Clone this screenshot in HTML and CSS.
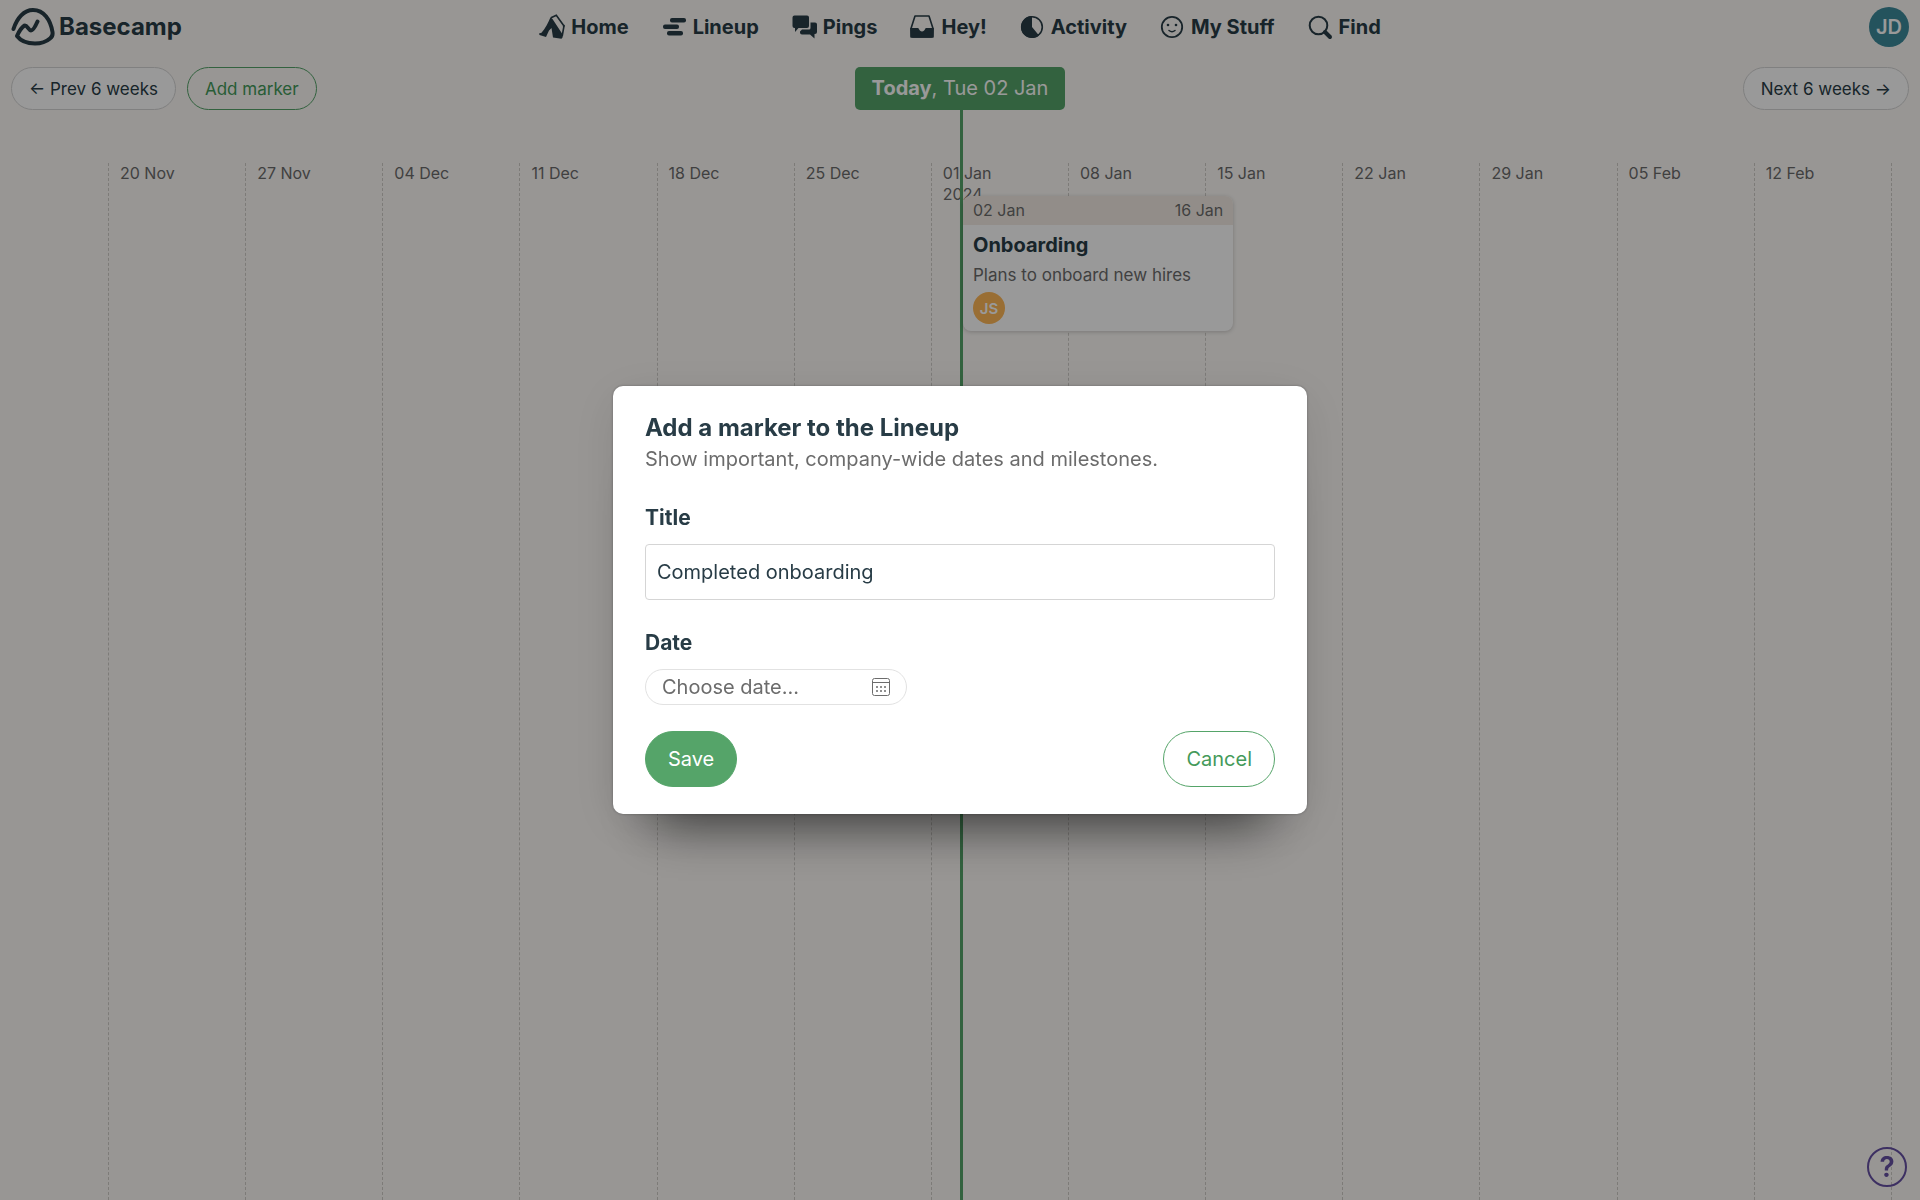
FILE: index.html
```
<!DOCTYPE html>
<html lang="en">
<head>
  <meta charset="utf-8">
  <title>Lineup - Basecamp</title>
  <link rel="stylesheet" href="styles.css">
</head>
<body>
  <header class="header">
    <a class="logo" href="#">
      <svg width="44" height="40" viewBox="0 0 44 40" fill="none" stroke="currentColor" stroke-width="4" stroke-linecap="round" stroke-linejoin="round">
        <path d="M2.500 22C6 11 13 3 22 3c11 0 17.500 10 19.500 22 .5 3 0 4.500-2.500 6.500C35 35 30 36.500 24 36.500c-9 0-15-3.500-18-7.500 1.500-3.500 4.500-8.500 7.500-10.500 2.500-1 4 5 6.500 5 2.200 0 4.500-4.500 6.500-9"/>
      </svg>
      <span>Basecamp</span>
    </a>
    <nav class="nav">
      <a href="#home">
        <svg width="26" height="26" viewBox="0 0 26 26" fill="currentColor">
          <path d="M11.500 3.200 13.500 5l9.500 14.500 .8 3.500-1.300 1.800-8.500-1.300-1.500-9.500-2.500 2.500-3 6.500L.5 21l-.5-1.500 2.500-.8C6.500 14 9 9 11.500 3.200z"/>
          <path d="M12 3.800 17.300 1.200 25 12l-1.800 10M25.800 11.200l-1.600 1.600" fill="none" stroke="currentColor" stroke-width="1.600"/>
        </svg>
        Home
      </a>
      <a href="#lineup">
        <svg width="26" height="26" viewBox="0 0 26 26" fill="currentColor">
          <rect x="9" y="4" width="16" height="4.500" rx="2"/>
          <rect x="2" y="10.500" width="16" height="4.500" rx="2"/>
          <rect x="6" y="17" width="16" height="4.500" rx="2"/>
        </svg>
        Lineup
      </a>
      <a href="#pings">
        <svg width="26" height="26" viewBox="0 0 26 26" fill="currentColor">
          <path d="M3.500 1.500h12.500a2 2 0 0 1 2 2v8.500a2 2 0 0 1-2 2H7.500L4 18v-4h-.5a2 2 0 0 1-2-2V3.500a2 2 0 0 1 2-2z"/>
          <path d="M19.500 8.500H24a2 2 0 0 1 2 2V18a2 2 0 0 1-2 2h-.5v4.500L19 20.500h-8a2 2 0 0 1-2-2v-1l2-2h7a1.500 1.500 0 0 0 1.500-1.500z"/>
        </svg>
        Pings
      </a>
      <a href="#hey">
        <svg width="26" height="26" viewBox="0 0 26 26">
          <path d="M6 2h14l4 12.500v8.500H2v-8.500z" fill="none" stroke="currentColor" stroke-width="1.600" stroke-linejoin="round"/>
          <path d="M1.200 14h7.300c.8 0 1.200.5 1.500 1.200.5 1.200 1.500 2.300 3 2.300s2.500-1.100 3-2.300c.3-.7.700-1.200 1.500-1.200h7.300l-.6 8a2 2 0 0 1-2 1.800H3.800a2 2 0 0 1-2-1.800z" fill="currentColor"/>
        </svg>
        Hey!
      </a>
      <a href="#activity">
        <svg width="26" height="26" viewBox="0 0 26 26">
          <circle cx="13" cy="13" r="10.300" fill="none" stroke="currentColor" stroke-width="1.600"/>
          <path d="M13 2v11l7 8.500A11 11 0 1 1 13 2z" fill="currentColor"/>
        </svg>
        Activity
      </a>
      <a href="#stuff">
        <svg width="26" height="26" viewBox="0 0 26 26" fill="none" stroke="currentColor" stroke-width="1.800" stroke-linecap="round">
          <circle cx="13" cy="13" r="10.200"/>
          <circle cx="9" cy="11" r="1.300" fill="currentColor" stroke="none"/>
          <circle cx="17" cy="11" r="1.300" fill="currentColor" stroke="none"/>
          <path d="M10 16.500q3 2.500 6 0" stroke-width="1.500"/>
        </svg>
        My Stuff
      </a>
      <a href="#find">
        <svg width="26" height="26" viewBox="0 0 26 26" fill="none" stroke="currentColor" stroke-linecap="round">
          <circle cx="11.500" cy="11.500" r="8.800" stroke-width="2"/>
          <path d="m18 18 5 5" stroke-width="4"/>
        </svg>
        Find
      </a>
    </nav>
    <div class="header-right">
      <a class="avatar avatar-me" href="#me">JD</a>
    </div>
  </header>

  <main class="lineup">
    <div class="toolbar">
      <div class="toolbar-left">
        <button class="btn-small">← Prev 6 weeks</button>
        <button class="btn-small btn-green">Add marker</button>
      </div>
      <div class="today"><strong>Today</strong>, Tue 02 Jan</div>
      <div class="toolbar-right">
        <button class="btn-small">Next 6 weeks →</button>
      </div>
    </div>

    <div class="weeks">
      <div class="week">20 Nov</div>
      <div class="week">27 Nov</div>
      <div class="week">04 Dec</div>
      <div class="week">11 Dec</div>
      <div class="week">18 Dec</div>
      <div class="week">25 Dec</div>
      <div class="week">01 Jan<br>2024</div>
      <div class="week">08 Jan</div>
      <div class="week">15 Jan</div>
      <div class="week">22 Jan</div>
      <div class="week">29 Jan</div>
      <div class="week">05 Feb</div>
      <div class="week">12 Feb</div>
      <div class="week"></div>
    </div>

    <div class="today-line"></div>

    <article class="project">
      <div class="project-dates"><span>02 Jan</span><span>16 Jan</span></div>
      <div class="project-body">
        <h3>Onboarding</h3>
        <p>Plans to onboard new hires</p>
        <span class="avatar avatar-js">JS</span>
      </div>
    </article>
  </main>

  <button class="help" aria-label="Help">?</button>

  <div class="overlay">
    <form class="modal">
      <h2>Add a marker to the Lineup</h2>
      <p class="subtitle">Show important, company-wide dates and milestones.</p>

      <label for="marker-title">Title</label>
      <input type="text" id="marker-title" class="title-input" value="Completed onboarding">

      <label for="marker-date">Date</label>
      <div class="date-field">
        <input type="text" id="marker-date" placeholder="Choose date...">
        <svg width="18" height="18" viewBox="0 0 18 18" fill="none" stroke="currentColor">
          <rect x=".5" y=".5" width="17" height="17" rx="2"/>
          <path d="M.5 4.500h17"/>
          <path d="M4 9h2m2 0h2m2 0h2M4 13h2m2 0h2m2 0h2" stroke-width="1.500"/>
        </svg>
      </div>

      <div class="actions">
        <button type="submit" class="btn btn-save">Save</button>
        <button type="button" class="btn btn-cancel">Cancel</button>
      </div>
    </form>
  </div>
</body>
</html>
```

FILE: styles.css
```
* {
  box-sizing: border-box;
}
body {
  margin: 0;
  min-height: 100vh;
  display: flex;
  flex-direction: column;
  font-family: Inter, "Liberation Sans", sans-serif;
  background-color: #fdfaf7;
  color: #283c46;
}
a {
  color: inherit;
  text-decoration: none;
}
button, input {
  font-family: inherit;
  margin: 0;
}
h2, h3, p {
  margin: 0;
}

/* header */
.header {
  display: flex;
  align-items: center;
  height: 53px;
  padding: 0 11px;
}
.logo, .header-right {
  flex: 1;
  display: flex;
  align-items: center;
}
.logo {
  gap: 4px;
  font-size: 24px;
  font-weight: 700;
}
.header-right {
  justify-content: flex-end;
}
.nav {
  display: flex;
  gap: 32px;
}
.nav a {
  display: flex;
  align-items: center;
  gap: 6px;
  font-size: 20px;
  font-weight: 700;
}
.avatar {
  display: flex;
  align-items: center;
  justify-content: center;
  border-radius: 50%;
  color: white;
  font-weight: 600;
}
.avatar-me {
  width: 40px;
  height: 40px;
  background-color: #3c8a9b;
  font-size: 20px;
}

/* lineup */
.lineup {
  position: relative;
  flex: 1;
  display: flex;
  flex-direction: column;
  overflow: hidden;
}
.toolbar {
  display: flex;
  align-items: center;
  padding: 14px 11px 53px;
}
.toolbar-left, .toolbar-right {
  flex: 1;
  display: flex;
  gap: 11px;
}
.toolbar-right {
  justify-content: flex-end;
}
.btn-small {
  height: 43px;
  padding: 0 17px;
  border: 1px solid #d5d5d5;
  border-radius: 22px;
  background-color: white;
  color: #283c46;
  font-size: 17px;
}
.btn-green {
  border-color: #55a469;
  background-color: transparent;
  color: #449a5a;
}
.today {
  height: 43px;
  padding: 0 17px;
  border-radius: 5px;
  background-color: #55a469;
  color: white;
  font-size: 20px;
  line-height: 43px;
}
.today-line {
  position: absolute;
  top: 57px;
  bottom: 0;
  left: 50%;
  width: 3px;
  background-color: #55a469;
}
.weeks {
  flex: 1;
  display: flex;
  padding-left: 108px;
}
.week {
  flex: 0 0 calc((100% + 108px) / 14);
  padding-left: 11px;
  border-left: 1px dashed #d0cdc9;
  color: #6c6c6c;
  font-size: 16px;
  line-height: 21px;
}
.project {
  position: absolute;
  top: 143px;
  left: calc(50% + 3px);
  width: calc(100% / 7 - 4px);
  border-radius: 8px;
  background-color: white;
  box-shadow: 0 1px 4px rgba(0, 0, 0, 0.2);
  overflow: hidden;
}
.project-dates {
  display: flex;
  justify-content: space-between;
  padding: 4px 10px;
  background-color: #f4ece5;
  color: #6c6c6c;
  font-size: 16px;
  line-height: 21px;
}
.project-body {
  padding: 7px 10px;
}
.project-body h3 {
  font-size: 20px;
  line-height: 26px;
}
.project-body p {
  padding: 4px 0;
  color: #6c6c6c;
  font-size: 17px;
  line-height: 26px;
}
.avatar-js {
  width: 32px;
  height: 32px;
  background-color: #ffb857;
  font-size: 15px;
}
.help {
  position: fixed;
  right: 13px;
  bottom: 13px;
  width: 40px;
  height: 40px;
  padding: 0;
  border: 2px solid #6650a4;
  border-radius: 50%;
  background-color: transparent;
  color: #6650a4;
  font-size: 28px;
  font-weight: 600;
  line-height: 36px;
}

/* add marker dialog */
.overlay {
  position: fixed;
  inset: 0;
  display: flex;
  align-items: center;
  justify-content: center;
  background-color: rgba(0, 0, 0, 0.4);
}
.modal {
  width: 694px;
  padding: 25px 32px 27px;
  border-radius: 10px;
  background-color: white;
  box-shadow: 0 0 3px rgba(0, 0, 0, 0.3), 0 10px 50px rgba(0, 0, 0, 0.1), 0 50px 50px -40px rgba(0, 0, 0, 0.6);
}
.modal h2 {
  font-size: 24px;
  line-height: 34px;
}
.subtitle {
  margin-bottom: 28px;
  color: #6c6c6c;
  font-size: 20px;
  line-height: 28px;
}
.modal label {
  display: block;
  margin-bottom: 9px;
  font-size: 21px;
  font-weight: 700;
  line-height: 34px;
}
.title-input {
  display: block;
  width: 100%;
  height: 56px;
  margin-bottom: 26px;
  padding: 0 11px;
  border: 1px solid #d5d5d5;
  border-radius: 4px;
  color: #283c46;
  font-size: 20px;
}
.date-field {
  display: flex;
  align-items: center;
  width: 262px;
  height: 36px;
  margin-bottom: 26px;
  padding: 0 16px;
  border: 1px solid #e2e2e2;
  border-radius: 18px;
  color: #6c6c6c;
}
.date-field input {
  flex: 1;
  min-width: 0;
  padding: 0;
  border: 0;
  background: none;
  font-size: 20px;
}
.date-field input::placeholder {
  color: #6c6c6c;
}
.actions {
  display: flex;
  justify-content: space-between;
}
.btn {
  height: 56px;
  padding: 0 22px;
  border: 1px solid #55a469;
  border-radius: 28px;
  font-size: 20px;
}
.btn-save {
  background-color: #55a469;
  color: white;
}
.btn-cancel {
  background-color: white;
  color: #449a5a;
}
```
